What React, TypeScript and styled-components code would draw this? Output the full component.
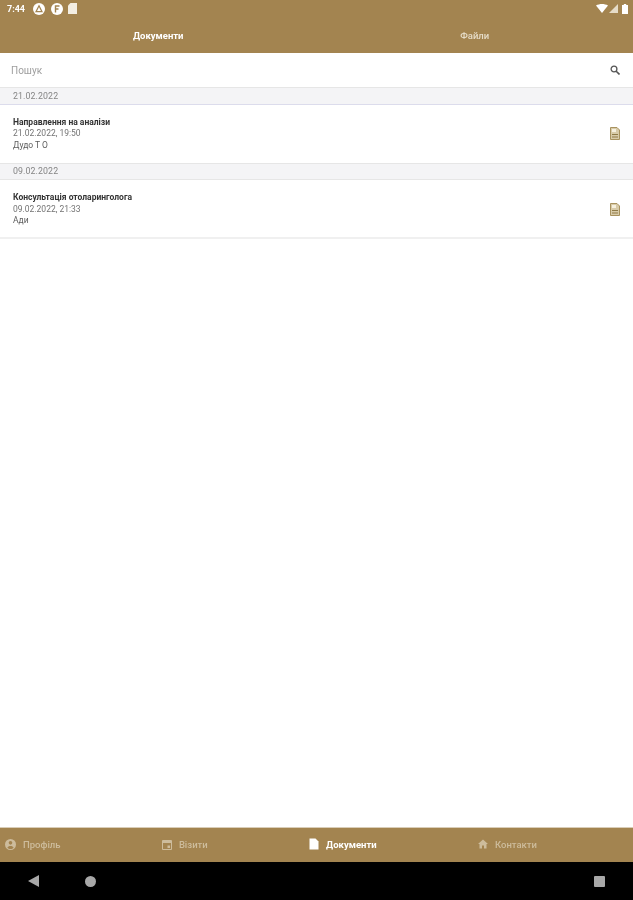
import React from "react";
import styled, { createGlobalStyle } from "styled-components";

const GOLD = "#a38450";
const MUTED = "#cdbc9c";

const GlobalStyle = createGlobalStyle`
  html, body {
    margin: 0;
    padding: 0;
    background: #fff;
    font-family: Roboto, "Liberation Sans", sans-serif;
  }
`;

const Screen = styled.div`
  width: 633px;
  height: 900px;
  display: flex;
  flex-direction: column;
  overflow: hidden;
  background: #fff;
  filter: blur(0.45px);
`;

const Header = styled.header`
  height: 53px;
  flex: none;
  background: ${GOLD};
  display: flex;
  flex-direction: column;
`;

const StatusBar = styled.div`
  height: 17px;
  display: flex;
  align-items: center;
  justify-content: space-between;
  padding: 0 5px 0 7px;
  color: #fff;
`;

const StatusGroup = styled.div<{ $wide?: boolean }>`
  display: flex;
  align-items: center;
  gap: ${(p) => (p.$wide ? 5.5 : 4)}px;
`;

const Clock = styled.span`
  font-size: 9px;
  font-weight: 700;
  margin-right: 2.5px;
`;

const Tabs = styled.div`
  flex: 1;
  display: grid;
  grid-template-columns: 1fr 1fr;
  align-items: center;
`;

const Tab = styled.div<{ $active?: boolean }>`
  text-align: center;
  font-size: 9.5px;
  font-weight: ${(p) => (p.$active ? 700 : 500)};
  color: ${(p) => (p.$active ? "#fff" : "#e6dcc8")};
`;

const SearchBar = styled.div`
  height: 34px;
  flex: none;
  display: flex;
  align-items: center;
  justify-content: space-between;
  padding: 0 13px 0 11px;
  font-size: 10px;
  color: #9e9e9e;
`;

const DateHeading = styled.div<{ $first?: boolean }>`
  height: ${(p) => (p.$first ? 16 : 14)}px;
  flex: none;
  display: flex;
  align-items: center;
  padding: 0 0 ${(p) => (p.$first ? 0 : 1)}px 13px;
  font-size: 8.8px;
  letter-spacing: 0.1px;
  color: #858585;
  background: #f4f4f6;
  border-top: 1px solid #e6e6e6;
  border-bottom: 1px solid ${(p) => (p.$first ? "#dcdcec" : "#e6e6e6")};
`;

const Row = styled.div<{ $first?: boolean }>`
  height: ${(p) => (p.$first ? 58 : 57)}px;
  flex: none;
  box-sizing: border-box;
  display: flex;
  align-items: center;
  justify-content: space-between;
  padding: ${(p) => (p.$first ? "0 13px 1px 13px" : "1px 13px 0 13px")};
`;

const RowText = styled.div`
  display: flex;
  flex-direction: column;
  gap: 1.2px;
  line-height: 10.5px;
  font-size: 8.5px;
  color: #737373;
`;

const RowTitle = styled.span`
  font-weight: 700;
  color: #333;
`;

const RowAuthor = styled.span`
  color: #5c5c5c;
`;

const Divider = styled.div`
  height: 2px;
  flex: none;
  background: #f0f0f0;
`;

const Spacer = styled.div`
  flex: 1;
`;

const BottomBar = styled.nav`
  height: 35px;
  flex: none;
  background: ${GOLD};
  border-top: 1px solid #d9cdb8;
  box-sizing: border-box;
  display: flex;
  align-items: center;
  justify-content: space-between;
  padding: 0 96px 2px 5px;
`;

const NavItem = styled.div<{ $active?: boolean }>`
  display: flex;
  align-items: center;
  gap: 7px;
  font-size: 9.5px;
  font-weight: ${(p) => (p.$active ? 700 : 500)};
  color: ${(p) => (p.$active ? "#fff" : MUTED)};
`;

const SystemNav = styled.div`
  height: 38px;
  flex: none;
  background: #000;
  display: flex;
  align-items: center;
  justify-content: space-between;
  padding: 0 28px;
`;

const SystemKeys = styled.div`
  display: flex;
  align-items: center;
  gap: 46px;
`;

const FileTypeIcon = () => (
  <svg width="10" height="13" viewBox="0 0 10 13">
    <path d="M0.5 0.5h6.5l2.5 2.5v9.5h-9z" fill="#d8cba9" stroke="#a8925f" />
    <rect x="2" y="2" width="4" height="3" fill="#f6f0de" />
    <rect x="2" y="7" width="6" height="1" fill="#8f7a48" />
    <rect x="2" y="9.5" width="6" height="1" fill="#8f7a48" />
  </svg>
);

const nav = [
  {
    label: "Профіль",
    icon: (
      <svg width="11" height="11" viewBox="0 0 12 12">
        <path
          fillRule="evenodd"
          fill={MUTED}
          d="M6 0a6 6 0 1 1 0 12A6 6 0 0 1 6 0zm0 2.2a2 2 0 1 0 0 4 2 2 0 0 0 0-4zM2.6 9.2C3.4 10.3 4.6 11 6 11s2.6-.7 3.4-1.8C9 8.2 7.6 7.5 6 7.5s-3 .7-3.4 1.7z"
        />
      </svg>
    ),
  },
  {
    label: "Візити",
    icon: (
      <svg width="10" height="11" viewBox="0 0 10 11">
        <path
          fillRule="evenodd"
          fill={MUTED}
          d="M1 1h8a1 1 0 0 1 1 1v8a1 1 0 0 1-1 1H1a1 1 0 0 1-1-1V2a1 1 0 0 1 1-1zm0 3v6h8V4zm4.5 2.5H8V9H5.5z"
        />
      </svg>
    ),
  },
  {
    label: "Документи",
    active: true,
    icon: (
      <svg width="10" height="12" viewBox="0 0 10 12">
        <path d="M0.5 0.5h6l3 3v8h-9z" fill="#fff" />
      </svg>
    ),
  },
  {
    label: "Контакти",
    icon: (
      <svg width="10" height="10" viewBox="0 0 10 10">
        <path d="M5 0.5L10 5H8.5v4.5H6V6.5H4v3H1.5V5H0z" fill={MUTED} />
      </svg>
    ),
  },
];

const documents = [
  {
    date: "21.02.2022",
    title: "Направлення на аналізи",
    time: "21.02.2022, 19:50",
    author: "Дудо Т О",
    first: true,
  },
  {
    date: "09.02.2022",
    title: "Консультація отоларинголога",
    time: "09.02.2022, 21:33",
    author: "Ади",
  },
];

export default function App() {
  return (
    <>
      <GlobalStyle />
      <Screen>
        <Header>
          <StatusBar>
            <StatusGroup $wide>
              <Clock>7:44</Clock>
              <svg width="12" height="12" viewBox="0 0 12 12">
                <circle cx="6" cy="6" r="6" fill="#fff" />
                <path d="M6 2.8L9 8.6H3z" fill="none" stroke={GOLD} strokeWidth="1.2" />
              </svg>
              <svg width="12" height="12" viewBox="0 0 12 12">
                <circle cx="6" cy="6" r="6" fill="#fff" />
                <path d="M4.5 9.5V3H8.5M4.5 6H7.5" fill="none" stroke={GOLD} strokeWidth="1.4" />
              </svg>
              <svg width="9" height="11" viewBox="0 0 9 11">
                <path d="M2.5 0H9v11H0V2.5z" fill="#f3eee3" />
              </svg>
            </StatusGroup>
            <StatusGroup>
              <svg width="12" height="9" viewBox="0 0 12 9">
                <path d="M0 1.5C3.5-.5 8.5-.5 12 1.5L6 9z" fill="#fff" />
              </svg>
              <svg width="9" height="9" viewBox="0 0 9 9" style={{ marginLeft: -3 }}>
                <path d="M9 0V9H0z" fill="#e6dcc8" />
              </svg>
              <svg width="6" height="10" viewBox="0 0 6 10">
                <path d="M1.8 0h2.4v1H6v9H0V1h1.8z" fill="#fff" />
              </svg>
            </StatusGroup>
          </StatusBar>
          <Tabs>
            <Tab $active>Документи</Tab>
            <Tab>Файли</Tab>
          </Tabs>
        </Header>
        <SearchBar>
          Пошук
          <svg width="10" height="10" viewBox="0 0 10 10">
            <circle cx="4" cy="4" r="2.9" fill="none" stroke="#555" strokeWidth="1.3" />
            <path d="M6.2 6.2L9.5 9.5" stroke="#555" strokeWidth="1.6" />
          </svg>
        </SearchBar>
        {documents.map((doc) => (
          <React.Fragment key={doc.date}>
            <DateHeading $first={doc.first}>{doc.date}</DateHeading>
            <Row $first={doc.first}>
              <RowText>
                <RowTitle>{doc.title}</RowTitle>
                <span>{doc.time}</span>
                <RowAuthor>{doc.author}</RowAuthor>
              </RowText>
              <FileTypeIcon />
            </Row>
          </React.Fragment>
        ))}
        <Divider />
        <Spacer />
        <BottomBar>
          {nav.map((item) => (
            <NavItem key={item.label} $active={item.active}>
              {item.icon}
              {item.label}
            </NavItem>
          ))}
        </BottomBar>
        <SystemNav>
          <SystemKeys>
            <svg width="11" height="12" viewBox="0 0 11 12">
              <path d="M11 0V12L0 6z" fill="#a8a8a8" />
            </svg>
            <svg width="11" height="11" viewBox="0 0 11 11">
              <circle cx="5.5" cy="5.5" r="5.5" fill="#a8a8a8" />
            </svg>
          </SystemKeys>
          <svg width="11" height="11" viewBox="0 0 11 11">
            <rect width="11" height="11" rx="1" fill="#a8a8a8" />
          </svg>
        </SystemNav>
      </Screen>
    </>
  );
}
